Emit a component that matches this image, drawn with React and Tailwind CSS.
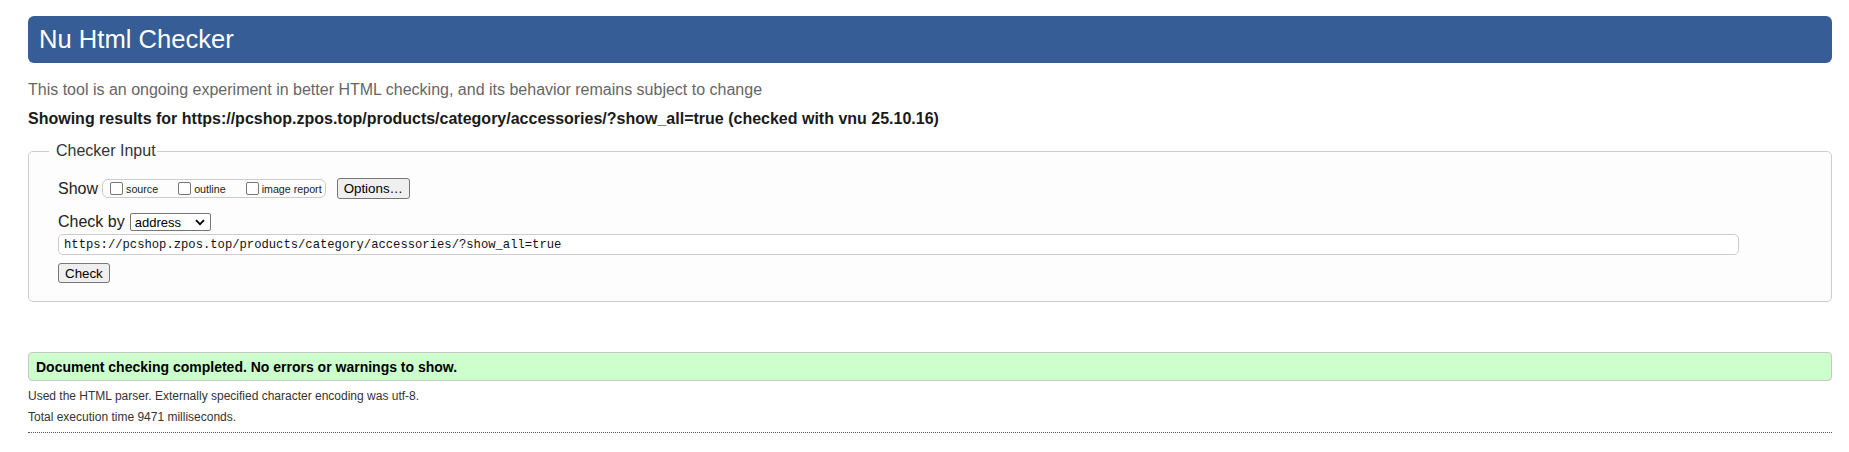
import React from "react";

const URL_VALUE = "https://pcshop.zpos.top/products/category/accessories/?show_all=true";

const Checkbox = ({ label, className = "" }) => (
  <label className={`flex items-center ${className}`}>
    <span className="w-[13px] h-[13px] border border-[#767676] rounded-[2px] bg-white mr-[3px]" />
    <span className="text-[10.7px] leading-[13px] text-[#222] pt-[2px]">{label}</span>
  </label>
);

const App = () => {
  return (
    <div className="min-h-screen bg-white pl-[28px] pr-[17px] pt-[16px] font-['Liberation_Sans',Arial,sans-serif] text-[#222]">
      {/* header */}
      <h1 className="h-[47px] flex items-center pl-[11px] bg-[#365d95] text-white rounded-[6px] text-[25.6px] leading-none">
        Nu Html Checker
      </h1>

      <p className="mt-[18px] text-[16px] leading-[18px] text-[#666]">
        This tool is an ongoing experiment in better HTML checking, and its behavior remains subject to change
      </p>
      <p className="mt-[11px] text-[16px] leading-[18px] font-bold text-[#1a1a1a]">
        Showing results for {URL_VALUE} (checked with vnu 25.10.16)
      </p>

      {/* checker input */}
      <fieldset className="mt-[14px] border border-[#ccc] rounded-[5px] bg-[#fdfdfd] pl-[20px] pr-[20px] pb-[18px]">
        <legend className="pl-[7px] pr-[1px] text-[16px] leading-[18px] text-[#333]">Checker Input</legend>

        <div className="pl-[9px]">
          <div className="mt-[18px] h-[21px] flex items-center">
            <span className="text-[16px] leading-[18px]">Show</span>
            <div className="ml-[4px] h-[19px] flex items-center border border-[#ccc] rounded-[6px] pl-[7px] pr-[3px]">
              <Checkbox label="source" />
              <Checkbox label="outline" className="ml-[20px]" />
              <Checkbox label="image report" className="ml-[20px]" />
            </div>
            <button className="ml-[11px] h-[21px] px-[6px] bg-[#efefef] border border-[#767676] rounded-[3px] text-[13.33px] leading-[15px] text-black">
              Options…
            </button>
          </div>

          <div className="mt-[14px] h-[18px] flex items-center">
            <span className="text-[16px] leading-[18px]">Check by</span>
            <div className="ml-[5px] w-[81px] h-[18px] flex items-center justify-between border border-[#767676] rounded-[2px] bg-white pl-[4px] pr-[5px]">
              <span className="text-[13px] leading-[15px] text-black">address</span>
              <svg width="10" height="7" viewBox="0 0 10 7">
                <path d="M1 1.2 L5 5.2 L9 1.2" fill="none" stroke="#000" strokeWidth="1.8" />
              </svg>
            </div>
          </div>

          <div className="mt-[3px] w-[1681px] h-[21px] flex items-center border border-[#ccc] rounded-[5px] bg-white pl-[5px]">
            <span className="font-['Liberation_Mono',monospace] text-[12.2px] leading-[14px] text-[#111]">{URL_VALUE}</span>
          </div>

          <button className="mt-[8px] block h-[20px] px-[6px] bg-[#efefef] border border-[#767676] rounded-[3px] text-[13.33px] leading-[15px] text-black">
            Check
          </button>
        </div>
      </fieldset>

      {/* result */}
      <div className="mt-[50px] h-[29px] flex items-center pl-[7px] bg-[#ccffcc] border border-[#c6c6c6] rounded-[4px]">
        <span className="text-[14px] leading-[16px] font-bold text-black">
          Document checking completed. No errors or warnings to show.
        </span>
      </div>

      <p className="mt-[8px] text-[12px] leading-[14px] text-[#333]">
        Used the HTML parser. Externally specified character encoding was utf-8.
      </p>
      <p className="mt-[7px] text-[12px] leading-[14px] text-[#333]">Total execution time 9471 milliseconds.</p>

      <div className="mt-[8px] border-t border-dotted border-[#555]" />
    </div>
  );
};

export default App;
